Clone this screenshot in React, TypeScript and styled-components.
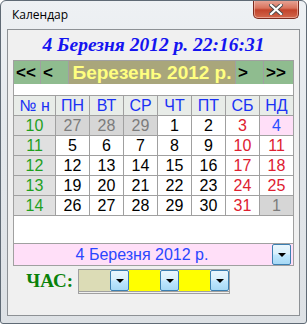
import React from 'react'
import styled, { createGlobalStyle } from 'styled-components'

const GlobalStyle = createGlobalStyle`
  html, body {
    margin: 0;
    padding: 0;
    background: #ffffff;
  }
  * {
    box-sizing: border-box;
  }
`

const Window = styled.div`
  width: 307px;
  height: 324px;
  border: 1px solid #5f6a75;
  border-radius: 6px 6px 3px 3px;
  background: linear-gradient(180deg, #eef1f4 0%, #e4e8ec 40%, #dde1e5 100%);
  display: flex;
  flex-direction: column;
  overflow: hidden;
`

const TitleBar = styled.div`
  height: 28px;
  display: flex;
  align-items: flex-start;
  justify-content: space-between;
  padding-left: 11px;
  padding-right: 7px;
`

const Title = styled.div`
  font-family: 'Open Sans', 'Noto Sans', sans-serif;
  font-size: 12px;
  color: #000000;
  line-height: 28px;
`

const CloseButton = styled.div`
  width: 46px;
  height: 19px;
  margin-top: -1px;
  border: 1px solid #7b2b1f;
  border-top: none;
  border-radius: 0 0 5px 5px;
  background: linear-gradient(180deg, #e8a89a 0%, #d9735d 45%, #c2432b 55%, #d2674c 100%);
  display: flex;
  align-items: center;
  justify-content: center;
  box-shadow: inset 0 0 0 1px rgba(255, 220, 210, 0.5);
`

const Client = styled.div`
  flex: 1;
  margin: 0 6px 7px 6px;
  border: 1px solid #8d9195;
  background: #f0f0f0;
  display: flex;
  flex-direction: column;
`

const DateTitle = styled.div`
  height: 30px;
  padding-top: 4px;
  text-align: center;
  font-family: 'Liberation Serif', serif;
  font-weight: bold;
  font-style: italic;
  font-size: 19.5px;
  line-height: 22px;
  color: #1414f0;
  white-space: nowrap;
`

const CalendarBox = styled.div`
  width: 281px;
  margin-left: 5px;
  border: 1px solid #a0a0a0;
  background: #ffffff;
  display: flex;
  flex-direction: column;
`

const NavRow = styled.div`
  display: grid;
  grid-template-columns: 26px 27px 166px 27px 29px;
  gap: 1px;
  height: 23px;
  background: #a0a0a0;
`

const NavButton = styled.div`
  background: #8fbc8f;
  font-family: 'Liberation Sans', sans-serif;
  font-weight: bold;
  font-size: 17px;
  line-height: 23px;
  color: #000000;
  padding-left: 2px;
`

const MonthTitle = styled.div`
  background: #a9a67b;
  font-family: 'Liberation Sans', sans-serif;
  font-weight: bold;
  font-size: 19px;
  line-height: 23px;
  color: #ffff80;
  text-align: center;
  white-space: nowrap;
`

const Spacer = styled.div<{ $h: number }>`
  height: ${({ $h }) => $h}px;
  background: #ffffff;
`

const Grid = styled.div`
  display: grid;
  grid-template-columns: 41px repeat(7, 33px);
  grid-auto-rows: 19px;
  gap: 1px;
  background: #a0a0a0;
  border-top: 1px solid #a0a0a0;
  border-bottom: 1px solid #a0a0a0;
`

type CellKind = 'head' | 'week' | 'other' | 'day' | 'weekend' | 'today'

const cellBg: Record<CellKind, string> = {
  head: '#e8ece8',
  week: '#e0e0e0',
  other: '#d6d6d6',
  day: '#ffffff',
  weekend: '#ffffff',
  today: '#ffdff8',
}

const cellColor: Record<CellKind, string> = {
  head: '#1a32f5',
  week: '#1fa01f',
  other: '#7c7c7c',
  day: '#000000',
  weekend: '#de2030',
  today: '#2a50ff',
}

const Cell = styled.div<{ $kind: CellKind }>`
  background: ${({ $kind }) => cellBg[$kind]};
  color: ${({ $kind }) => cellColor[$kind]};
  font-family: 'Liberation Sans', sans-serif;
  font-size: 16px;
  line-height: 19px;
  text-align: center;
  white-space: nowrap;
`

const Combo = styled.div`
  display: flex;
  align-items: center;
  height: 22px;
  border-top: 1px solid #a0a0a0;
  background: #ffdff8;
  padding-right: 2px;
`

const ComboText = styled.div`
  flex: 1;
  font-family: 'Liberation Sans', sans-serif;
  font-size: 16px;
  line-height: 21px;
  color: #2a46ff;
  text-align: center;
  padding-right: 2px;
`

const DropButton = styled.div`
  width: 19px;
  height: 21px;
  border: 1px solid #3c7fb1;
  border-radius: 2px;
  background: linear-gradient(180deg, #eaf6fd 0%, #d9f0fc 45%, #bee6fd 55%, #a7d9f5 100%);
  display: flex;
  align-items: center;
  justify-content: center;
  flex-shrink: 0;
`

const Arrow = styled.div`
  width: 0;
  height: 0;
  border-left: 4px solid transparent;
  border-right: 4px solid transparent;
  border-top: 4px solid #000000;
`

const TimeRow = styled.div`
  display: flex;
  align-items: flex-start;
  margin-top: 3px;
  padding-left: 27px;
`

const TimeLabel = styled.div`
  width: 38px;
  margin-right: 5px;
  font-family: 'Liberation Serif', serif;
  font-weight: bold;
  font-size: 19px;
  line-height: 23px;
  color: #0a820a;
  white-space: nowrap;
  display: flex;
  justify-content: flex-end;
`

const TimeBox = styled.div`
  display: flex;
  border: 1px solid #a0a0a0;
  border-bottom: 3px double #a0a0a0;
  background: #f0f0f0;
`

const TimeField = styled.div<{ $bg: string }>`
  width: 31px;
  height: 21px;
  background: ${({ $bg }) => $bg};
`

const CloseIcon = () => (
  <svg width="14" height="11" viewBox="0 0 14 11">
    <path
      d="M2 1 L12 10 M12 1 L2 10"
      stroke="#4a4a4a"
      strokeWidth="4"
      strokeLinecap="square"
      fill="none"
    />
    <path
      d="M2 1 L12 10 M12 1 L2 10"
      stroke="#ffffff"
      strokeWidth="2.2"
      strokeLinecap="square"
      fill="none"
    />
  </svg>
)

const weekdays = ['ПН', 'ВТ', 'СР', 'ЧТ', 'ПТ', 'СБ', 'НД']

type Day = { n: number; kind: CellKind }

const weeks: { no: number; days: Day[] }[] = [
  {
    no: 10,
    days: [
      { n: 27, kind: 'other' },
      { n: 28, kind: 'other' },
      { n: 29, kind: 'other' },
      { n: 1, kind: 'day' },
      { n: 2, kind: 'day' },
      { n: 3, kind: 'weekend' },
      { n: 4, kind: 'today' },
    ],
  },
  ...[11, 12, 13].map((no, i) => ({
    no,
    days: Array.from({ length: 7 }, (_, d) => ({
      n: 5 + i * 7 + d,
      kind: (d >= 5 ? 'weekend' : 'day') as CellKind,
    })),
  })),
  {
    no: 14,
    days: [
      { n: 26, kind: 'day' },
      { n: 27, kind: 'day' },
      { n: 28, kind: 'day' },
      { n: 29, kind: 'day' },
      { n: 30, kind: 'day' },
      { n: 31, kind: 'weekend' },
      { n: 1, kind: 'other' },
    ],
  },
]

export default function App() {
  return (
    <>
      <GlobalStyle />
      <Window>
        <TitleBar>
          <Title>Календар</Title>
          <CloseButton>
            <CloseIcon />
          </CloseButton>
        </TitleBar>
        <Client>
          <DateTitle>4 Березня 2012 р. 22:16:31</DateTitle>
          <CalendarBox>
            <NavRow>
              <NavButton>&lt;&lt;</NavButton>
              <NavButton>&lt;</NavButton>
              <MonthTitle>Березень 2012 р.</MonthTitle>
              <NavButton>&gt;</NavButton>
              <NavButton>&gt;&gt;</NavButton>
            </NavRow>
            <Spacer $h={11} />
            <Grid>
              <Cell $kind="head">№ н</Cell>
              {weekdays.map((w) => (
                <Cell key={w} $kind="head">
                  {w}
                </Cell>
              ))}
              {weeks.map((week) => (
                <React.Fragment key={week.no}>
                  <Cell $kind="week">{week.no}</Cell>
                  {week.days.map((d, i) => (
                    <Cell key={i} $kind={d.kind}>
                      {d.n}
                    </Cell>
                  ))}
                </React.Fragment>
              ))}
            </Grid>
            <Spacer $h={27} />
            <Combo>
              <ComboText>4 Березня 2012 р.</ComboText>
              <DropButton>
                <Arrow />
              </DropButton>
            </Combo>
          </CalendarBox>
          <TimeRow>
            <TimeLabel>ЧАС:</TimeLabel>
            <TimeBox>
              <TimeField $bg="#dcdcb6" />
              <DropButton>
                <Arrow />
              </DropButton>
              <TimeField $bg="#ffff00" />
              <DropButton>
                <Arrow />
              </DropButton>
              <TimeField $bg="#ffff00" />
              <DropButton>
                <Arrow />
              </DropButton>
            </TimeBox>
          </TimeRow>
        </Client>
      </Window>
    </>
  )
}
